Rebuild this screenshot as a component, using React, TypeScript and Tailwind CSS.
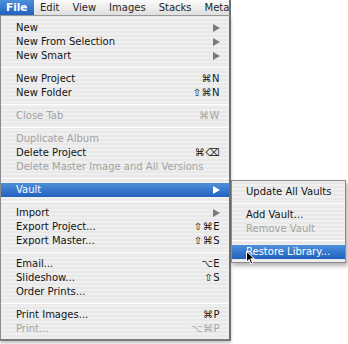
const font = { fontFamily: '"DejaVu Sans", "Liberation Sans", sans-serif' };

type Item =
  | { sep: true }
  | { label: string; key?: string; sub?: boolean; off?: boolean; active?: boolean };

const items: Item[] = [
  { label: 'New', sub: true },
  { label: 'New From Selection', sub: true },
  { label: 'New Smart', sub: true },
  { sep: true },
  { label: 'New Project', key: '⌘N' },
  { label: 'New Folder', key: '⇧⌘N' },
  { sep: true },
  { label: 'Close Tab', key: '⌘W', off: true },
  { sep: true },
  { label: 'Duplicate Album', off: true },
  { label: 'Delete Project', key: '⌘⌫' },
  { label: 'Delete Master Image and All Versions', off: true },
  { sep: true },
  { label: 'Vault', sub: true, active: true },
  { sep: true },
  { label: 'Import', sub: true },
  { label: 'Export Project...', key: '⇧⌘E' },
  { label: 'Export Master...', key: '⇧⌘S' },
  { sep: true },
  { label: 'Email...', key: '⌥E' },
  { label: 'Slideshow...', key: '⇧S' },
  { label: 'Order Prints...' },
  { sep: true },
  { label: 'Print Images...', key: '⌘P' },
  { label: 'Print...', key: '⌥⌘P', off: true },
];

const vaultItems: Item[] = [
  { label: 'Update All Vaults' },
  { sep: true },
  { label: 'Add Vault...' },
  { label: 'Remove Vault', off: true },
  { sep: true },
  { label: 'Restore Library...', active: true },
];

const stripes =
  'bg-[repeating-linear-gradient(0deg,#efefef_0px,#efefef_2px,#e8e8e8_2px,#e8e8e8_4px)]';

const Arrow = ({ white }: { white?: boolean }) => (
  <svg width="7" height="8" viewBox="0 0 7 8">
    <path d="M0 0 L7 4 L0 8 Z" fill={white ? '#ffffff' : '#7a7a7a'} />
  </svg>
);

const Row = ({ item, padL }: { item: Item; padL: string }) => {
  if ('sep' in item) {
    return (
      <div className="h-[9px] flex items-center">
        <div className="w-full h-px bg-[#d4d4d4] border-b border-white" />
      </div>
    );
  }
  return (
    <div
      className={`h-[14px] flex items-center justify-between ${padL} pr-[9px] text-[10px] leading-none ${
        item.active
          ? 'bg-gradient-to-b from-[#4e8fdb] to-[#2361be] text-white'
          : item.off
          ? 'text-[#a3a3a3]'
          : 'text-[#141414]'
      }`}
    >
      <span>{item.label}</span>
      {item.sub && <Arrow white={item.active} />}
      {item.key && <span className="tracking-[0.5px]">{item.key}</span>}
    </div>
  );
};

const App = () => {
  const bar = ['Edit', 'View', 'Images', 'Stacks', 'Meta'];
  return (
    <div className="relative w-[348px] h-[344px] bg-white overflow-hidden" style={font}>
      <div className="w-[231px] flex flex-col">
        {/* menu bar */}
        <div className="h-[16px] flex items-stretch bg-gradient-to-b from-[#fbfbfb] to-[#dedede] border-b border-[#9a9a9a] border-r-2 border-r-[#6f6f6f] overflow-hidden text-[10px]">
          <div className="w-[34px] shrink-0 flex items-center pl-[6px] bg-gradient-to-b from-[#4e8fdb] to-[#2361be] text-white font-bold text-[10.5px]">
            File
          </div>
          {bar.map((b) => (
            <div key={b} className="flex items-center pl-[6px] pr-[7px] text-[#262626] whitespace-nowrap">
              {b}
            </div>
          ))}
        </div>

        {/* file menu */}
        <div
          className={`${stripes} pt-[5px] pb-[3px] border-l border-[#8a8a8a] border-r-2 border-r-[#6f6f6f] border-b-2 border-b-[#7a7a7a] shadow-[0_2px_3px_rgba(0,0,0,0.25)]`}
        >
          {items.map((it, i) => (
            <Row key={i} item={it} padL="pl-[15px]" />
          ))}
        </div>
      </div>

      {/* vault submenu */}
      <div
        className={`absolute left-[231px] top-[180px] w-[115px] ${stripes} pt-[4px] pb-[3px] border border-[#8a8a8a] shadow-[2px_3px_4px_rgba(0,0,0,0.3)]`}
      >
        {vaultItems.map((it, i) => (
          <Row key={i} item={it} padL="pl-[14px]" />
        ))}
      </div>

      {/* cursor */}
      <svg className="absolute left-[246px] top-[251px]" width="10" height="14" viewBox="0 0 10 14">
        <path d="M0.5 0.5 L0.5 11 L3 8.5 L5 13 L6.8 12.2 L4.8 7.8 L8.5 7.8 Z" fill="#000" stroke="#fff" strokeWidth="1" />
      </svg>
    </div>
  );
};

export default App;
